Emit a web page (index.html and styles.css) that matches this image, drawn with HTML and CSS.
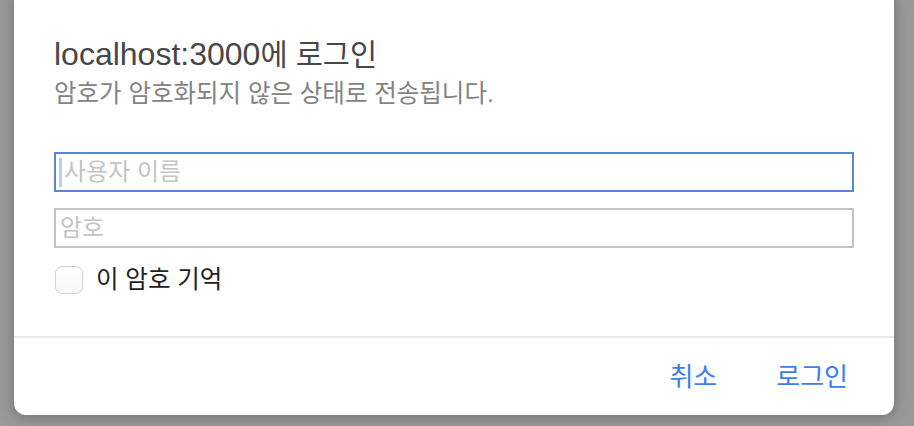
FILE: index.html
```html
<!DOCTYPE html>
<html lang="ko">
<head>
<meta charset="utf-8">
<title>로그인</title>
<link rel="stylesheet" href="styles.css">
</head>
<body>
<div class="dialog">
  <div class="content">
    <div class="title"><span class="host">localhost:3000</span>에 로그인</div>
    <div class="subtitle">암호가 암호화되지 않은 상태로 전송됩니다.</div>
    <div class="fields">
      <div class="field focused"><span class="caret"></span><span class="placeholder">사용자 이름</span></div>
      <div class="field"><span class="placeholder">암호</span></div>
    </div>
    <label class="remember"><span class="checkbox"></span><span class="remember-text">이 암호 기억</span></label>
  </div>
  <div class="footer">
    <span class="btn">취소</span>
    <span class="btn">로그인</span>
  </div>
</div>
</body>
</html>
```
FILE: styles.css
```css
html, body {
  margin: 0;
  padding: 0;
  background: #999999;
  height: 100%;
  overflow: hidden;
}
body {
  font-family: "Liberation Sans", "Noto Sans CJK KR", sans-serif;
}
.dialog {
  width: 880px;
  height: 425px;
  margin: -10px 0 0 14px;
  background: #ffffff;
  border-radius: 12px;
  box-shadow: 0 2px 14px rgba(0, 0, 0, 0.28);
  display: flex;
  flex-direction: column;
}
.content {
  padding: 47px 40px 42px 40px;
  border-bottom: 2px solid #e8e8e8;
}
.title {
  font-size: 29.5px;
  line-height: 34px;
  height: 34px;
  color: #474747;
  white-space: nowrap;
}
.host {
  font-size: 32px;
  line-height: 34px;
}
.subtitle {
  margin-top: 10px;
  font-size: 24.5px;
  line-height: 26px;
  height: 26px;
  color: #838383;
  white-space: nowrap;
}
.fields {
  margin-top: 45px;
  display: flex;
  flex-direction: column;
  gap: 16px;
  width: 800px;
}
.field {
  box-sizing: border-box;
  height: 40px;
  border: 2px solid #c2c2c2;
  display: flex;
  align-items: center;
  padding-left: 3px;
}
.field.focused {
  border-color: #5b86d8;
}
.caret {
  width: 3px;
  height: 29px;
  background: #b9cdf3;
  margin-right: 2px;
}
.placeholder {
  font-size: 24px;
  color: #c4c4c4;
  line-height: 36px;
}
.field .placeholder:first-child {
  padding-left: 1px;
}
.remember {
  margin-top: 18px;
  display: flex;
  align-items: center;
  gap: 13px;
  padding-left: 1px;
  height: 28px;
}
.checkbox {
  box-sizing: border-box;
  width: 28px;
  height: 28px;
  border: 1px solid #d2d2d2;
  border-radius: 7px;
  background: linear-gradient(#ffffff, #f7f7f7);
}
.remember-text {
  font-size: 24.5px;
  line-height: 28px;
  color: #222222;
}
.footer {
  flex: 1;
  display: flex;
  align-items: center;
  justify-content: flex-end;
  gap: 59px;
  padding-right: 46px;
}
.btn {
  font-size: 26px;
  color: #3a7ef0;
  line-height: 30px;
}
```
